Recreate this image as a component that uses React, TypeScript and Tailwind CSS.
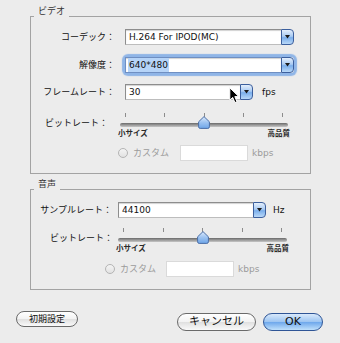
import React, { useId } from "react";

function Arrow() {
  return (
    <svg width="5" height="4" viewBox="0 0 5 4" className="block">
      <path d="M0 0 L5 0 L2.5 3.5 Z" fill="#1a1a1a" />
    </svg>
  );
}

function Popup({
  value,
  cls,
  focused = false,
  highlight = false,
}: {
  value: string;
  cls: string;
  focused?: boolean;
  highlight?: boolean;
}) {
  return (
    <div
      className={`flex h-[16px] ${cls} ${
        focused ? "rounded-[3px] shadow-[0_0_1px_3px_#8fb5e7]" : ""
      }`}
    >
      <div
        className={`flex min-w-0 flex-1 items-center border border-r-0 bg-white pl-[2px] text-[9px] leading-[12px] text-[#111] shadow-[inset_0_1px_1px_rgba(0,0,0,0.18)] ${
          focused ? "border-[#6f8fc2]" : "border-[#8d8d8d] border-b-[#bdbdbd]"
        }`}
      >
        {highlight ? (
          <span className="bg-[#b6d4f8] px-[1px] py-[1px]">{value}</span>
        ) : (
          <span className="px-[1px]">{value}</span>
        )}
      </div>
      <div className="flex w-[13px] items-center justify-center rounded-r-[4px] border border-[#3c5f9d] bg-[linear-gradient(to_bottom,#e4effc,#a9caf2_45%,#7aaeeb_55%,#b9d8f8)]">
        <Arrow />
      </div>
    </div>
  );
}

function Slider({ cls }: { cls: string }) {
  const id = useId().replace(/:/g, "");
  return (
    <div className={`relative ${cls}`}>
      <div className="flex justify-between px-[5px]">
        {[0, 1, 2, 3, 4].map((i) => (
          <div key={i} className="h-[4px] w-px bg-[#8c8c8c]" />
        ))}
      </div>
      <div className="mt-[6px] h-[4px] rounded-full bg-[linear-gradient(to_bottom,#6a6a6a,#9d9d9d_55%,#c6c6c6)]" />
      <div className="-mx-[2px] mt-[2px] flex justify-between text-[7.5px] font-bold leading-[9px] text-[#2a2a2a]">
        <span>小サイズ</span>
        <span>高品質</span>
      </div>
      <svg
        className="absolute left-1/2 top-[3px] -translate-x-1/2"
        width="12"
        height="13"
        viewBox="0 0 12 13"
      >
        <defs>
          <linearGradient id={id} x1="0" y1="0" x2="0" y2="1">
            <stop offset="0" stopColor="#dceafc" />
            <stop offset="0.5" stopColor="#9dc3f1" />
            <stop offset="1" stopColor="#6ea5e8" />
          </linearGradient>
        </defs>
        <path
          d="M6 0.6 L11.4 5.8 L11.4 10.8 Q11.4 12.4 9.8 12.4 L2.2 12.4 Q0.6 12.4 0.6 10.8 L0.6 5.8 Z"
          fill={`url(#${id})`}
          stroke="#4b6ea6"
          strokeWidth="1"
        />
      </svg>
    </div>
  );
}

function Radio() {
  return (
    <div className="h-[10px] w-[10px] rounded-full border border-[#b4b4b4] bg-[linear-gradient(to_bottom,#f4f4f4,#e2e2e2)]" />
  );
}

function Cursor() {
  return (
    <svg
      className="absolute left-[229px] top-[87px]"
      width="11"
      height="17"
      viewBox="0 0 11 17"
    >
      <path
        d="M0.8 0.8 L0.8 13.2 L3.7 10.4 L5.9 15.6 L8 14.7 L5.8 9.6 L9.8 9.6 Z"
        fill="#000"
        stroke="#fff"
        strokeWidth="1"
        strokeLinejoin="round"
      />
    </svg>
  );
}

export default function App() {
  return (
    <div className="relative h-[343px] w-[340px] overflow-hidden bg-[#ececec] pt-[6px] font-['DejaVu_Sans','Noto_Sans_CJK_JP',sans-serif] text-[#111]">
      {/* Video group */}
      <fieldset className="ml-[30px] w-[281px] border border-[#a3a3a3] pb-[12px]">
        <legend className="ml-[3px] px-[4px] pb-[10px] text-[9px] leading-[11px] text-[#333]">
          ビデオ
        </legend>
        <div className="mt-[2px] flex items-center">
          <div className="w-[84px] text-right text-[9px] leading-[12px]">コーデック：</div>
          <Popup value="H.264 For IPOD(MC)" cls="ml-[10px] w-[169px]" />
        </div>
        <div className="mt-[12px] flex items-center">
          <div className="w-[84px] text-right text-[9px] leading-[12px]">解像度：</div>
          <Popup value="640*480" cls="ml-[10px] w-[169px]" focused highlight />
        </div>
        <div className="mt-[11px] flex items-center">
          <div className="w-[84px] text-right text-[9px] leading-[12px]">フレームレート：</div>
          <Popup value="30" cls="ml-[10px] w-[128px]" />
          <span className="ml-[9px] text-[9px] leading-[12px]">fps</span>
        </div>
        <div className="mt-[13px] flex items-start">
          <div className="mt-[4px] w-[77px] text-right text-[9px] leading-[12px]">ビットレート：</div>
          <Slider cls="ml-[12px] w-[168px]" />
        </div>
        <div className="mt-[7px] flex items-center">
          <div className="ml-[87px]">
            <Radio />
          </div>
          <span className="ml-[5px] text-[9px] leading-[12px] text-[#9b9b9b]">カスタム</span>
          <div className="ml-[11px] h-[16px] w-[68px] border border-[#dadada] bg-white" />
          <span className="ml-[4px] text-[9px] leading-[12px] text-[#9b9b9b]">kbps</span>
        </div>
      </fieldset>

      {/* Audio group */}
      <fieldset className="ml-[30px] mt-[5px] w-[281px] border border-[#a3a3a3] pb-[12px]">
        <legend className="ml-[3px] px-[4px] pb-[10px] text-[9px] leading-[11px] text-[#333]">
          音声
        </legend>
        <div className="mt-[2px] flex items-center">
          <div className="w-[81px] text-right text-[9px] leading-[12px]">サンプルレート：</div>
          <Popup value="44100" cls="ml-[6px] w-[148px]" />
          <span className="ml-[7px] text-[9px] leading-[12px]">Hz</span>
        </div>
        <div className="mt-[10px] flex items-start">
          <div className="mt-[4px] w-[82px] text-right text-[9px] leading-[12px]">ビットレート：</div>
          <Slider cls="ml-[5px] w-[169px]" />
        </div>
        <div className="mt-[8px] flex items-center">
          <div className="ml-[74px]">
            <Radio />
          </div>
          <span className="ml-[5px] text-[9px] leading-[12px] text-[#9b9b9b]">カスタム</span>
          <div className="ml-[10px] h-[16px] w-[68px] border border-[#dadada] bg-white" />
          <span className="ml-[4px] text-[9px] leading-[12px] text-[#9b9b9b]">kbps</span>
        </div>
      </fieldset>

      {/* Buttons */}
      <div className="mt-[21px] flex items-start">
        <button className="ml-[16px] flex h-[16px] w-[62px] items-center justify-center rounded-full border border-[#6a6a6a] bg-[linear-gradient(to_bottom,#ffffff,#f2f2f2_50%,#e0e0e0_52%,#fafafa)] text-[9px] leading-[12px] text-[#111]">
          初期設定
        </button>
        <button className="ml-auto mt-[2px] flex h-[18px] w-[79px] items-center justify-center rounded-full border border-[#6a6a6a] bg-[linear-gradient(to_bottom,#ffffff,#f2f2f2_50%,#e0e0e0_52%,#fafafa)] text-[11px] leading-[14px] text-[#111]">
          キャンセル
        </button>
        <button className="ml-[7px] mr-[17px] mt-[2px] flex h-[18px] w-[60px] items-center justify-center rounded-full border border-[#2f5596] bg-[linear-gradient(to_bottom,#d9e9fb,#9dc5f2_48%,#6fa8ec_52%,#bfe0fb)] text-[11px] font-medium leading-[14px] text-[#111]">
          OK
        </button>
      </div>

      <Cursor />
    </div>
  );
}
